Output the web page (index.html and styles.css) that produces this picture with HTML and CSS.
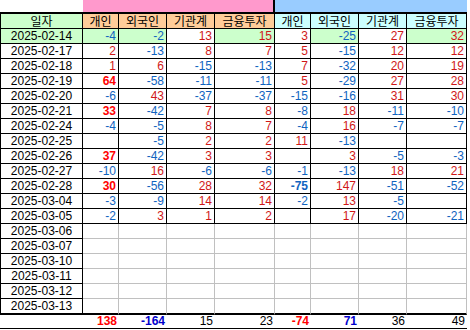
FILE: index.html
```html
<!DOCTYPE html>
<html lang="ko">
<head>
<meta charset="utf-8">
<link rel="stylesheet" href="styles.css">
</head>
<body>
<div class="sheet">
  <div class="band blank"></div>
  <div class="band pink"></div>
  <div class="band blue"></div>

  <div class="hd date-hd first">일자</div>
  <div class="hd a">개인</div>
  <div class="hd a">외국인</div>
  <div class="hd a">기관계</div>
  <div class="hd a sep">금융투자</div>
  <div class="hd b">개인</div>
  <div class="hd b">외국인</div>
  <div class="hd b">기관계</div>
  <div class="hd b">금융투자</div>

  <div class="c d first g">2025-02-14</div><div class="c n g blu">-4</div><div class="c n g blu">-2</div><div class="c n red">13</div><div class="c n g red sep">15</div><div class="c n red">3</div><div class="c n g blu">-25</div><div class="c n red">27</div><div class="c n g red">32</div>
  <div class="c d first">2025-02-17</div><div class="c n red">2</div><div class="c n blu">-13</div><div class="c n red">8</div><div class="c n red sep">7</div><div class="c n red">5</div><div class="c n blu">-15</div><div class="c n red">12</div><div class="c n red">12</div>
  <div class="c d first">2025-02-18</div><div class="c n red">1</div><div class="c n red">6</div><div class="c n blu">-15</div><div class="c n blu sep">-13</div><div class="c n red">7</div><div class="c n blu">-32</div><div class="c n red">20</div><div class="c n red">19</div>
  <div class="c d first">2025-02-19</div><div class="c n bred">64</div><div class="c n blu">-58</div><div class="c n blu">-11</div><div class="c n blu sep">-11</div><div class="c n red">5</div><div class="c n blu">-29</div><div class="c n red">27</div><div class="c n red">28</div>
  <div class="c d first">2025-02-20</div><div class="c n blu">-6</div><div class="c n red">43</div><div class="c n blu">-37</div><div class="c n blu sep">-37</div><div class="c n blu">-15</div><div class="c n blu">-16</div><div class="c n red">31</div><div class="c n red">30</div>
  <div class="c d first">2025-02-21</div><div class="c n bred">33</div><div class="c n blu">-42</div><div class="c n red">7</div><div class="c n red sep">8</div><div class="c n blu">-8</div><div class="c n red">18</div><div class="c n blu">-11</div><div class="c n blu">-10</div>
  <div class="c d first">2025-02-24</div><div class="c n blu">-4</div><div class="c n blu">-5</div><div class="c n red">8</div><div class="c n red sep">7</div><div class="c n blu">-4</div><div class="c n red">16</div><div class="c n blu">-7</div><div class="c n blu">-7</div>
  <div class="c d first">2025-02-25</div><div class="c n"></div><div class="c n blu">-5</div><div class="c n red">2</div><div class="c n red sep">2</div><div class="c n red">11</div><div class="c n blu">-13</div><div class="c n"></div><div class="c n"></div>
  <div class="c d first">2025-02-26</div><div class="c n bred">37</div><div class="c n blu">-42</div><div class="c n red">3</div><div class="c n red sep">3</div><div class="c n"></div><div class="c n red">3</div><div class="c n blu">-5</div><div class="c n blu">-3</div>
  <div class="c d first">2025-02-27</div><div class="c n blu">-10</div><div class="c n red">16</div><div class="c n blu">-6</div><div class="c n blu sep">-6</div><div class="c n blu">-1</div><div class="c n blu">-13</div><div class="c n red">18</div><div class="c n red">21</div>
  <div class="c d first">2025-02-28</div><div class="c n bred">30</div><div class="c n blu">-56</div><div class="c n red">28</div><div class="c n red sep">32</div><div class="c n bblu">-75</div><div class="c n red">147</div><div class="c n blu">-51</div><div class="c n blu">-52</div>
  <div class="c d first">2025-03-04</div><div class="c n blu">-3</div><div class="c n blu">-9</div><div class="c n red">14</div><div class="c n red sep">14</div><div class="c n blu">-2</div><div class="c n red">13</div><div class="c n blu">-5</div><div class="c n"></div>
  <div class="c d first">2025-03-05</div><div class="c n blu">-2</div><div class="c n red">3</div><div class="c n red">1</div><div class="c n red sep">2</div><div class="c n"></div><div class="c n red">17</div><div class="c n blu">-20</div><div class="c n blu">-21</div>

  <div class="c d first">2025-03-06</div><div class="c e"></div><div class="c e"></div><div class="c e"></div><div class="c e"></div><div class="c e"></div><div class="c e"></div><div class="c e"></div><div class="c e"></div>
  <div class="c d first">2025-03-07</div><div class="c e"></div><div class="c e"></div><div class="c e"></div><div class="c e"></div><div class="c e"></div><div class="c e"></div><div class="c e"></div><div class="c e"></div>
  <div class="c d first">2025-03-10</div><div class="c e"></div><div class="c e"></div><div class="c e"></div><div class="c e"></div><div class="c e"></div><div class="c e"></div><div class="c e"></div><div class="c e"></div>
  <div class="c d first">2025-03-11</div><div class="c e"></div><div class="c e"></div><div class="c e"></div><div class="c e"></div><div class="c e"></div><div class="c e"></div><div class="c e"></div><div class="c e"></div>
  <div class="c d first">2025-03-12</div><div class="c e"></div><div class="c e"></div><div class="c e"></div><div class="c e"></div><div class="c e"></div><div class="c e"></div><div class="c e"></div><div class="c e"></div>
  <div class="c d first last">2025-03-13</div><div class="c e last"></div><div class="c e last"></div><div class="c e last"></div><div class="c e last"></div><div class="c e last"></div><div class="c e last"></div><div class="c e last"></div><div class="c e last"></div>

  <div class="t tfirst"></div><div class="t n bred">138</div><div class="t n tblu">-164</div><div class="t n">15</div><div class="t n">23</div><div class="t n bred">-74</div><div class="t n tblu">71</div><div class="t n">36</div><div class="t n">49</div>
</div>
</body>
</html>
```
FILE: styles.css
```css
html, body {
  margin: 0;
  padding: 0;
  background: #ffffff;
}
.sheet {
  display: grid;
  grid-template-columns: 83px 36px 48px 48px 60px 36px 48px 48px 60px;
  grid-template-rows: 14px 15px repeat(18, 15px) 16px 14px;
  width: 467px;
  font-family: "Liberation Sans", Arial, sans-serif;
  font-size: 12px;
  color: #000;
}
.sheet > div {
  box-sizing: border-box;
  white-space: nowrap;
}
.band {
  border-bottom: 2px solid #000;
}
.band.blank { background: #fff; }
.band.pink {
  grid-column: span 4;
  background: #ff99cc;
  border-right: 2px solid #000;
}
.band.blue {
  grid-column: span 4;
  background: #99ccff;
}
.hd {
  font-family: "Noto Sans CJK KR", sans-serif;
  font-size: 12px;
  line-height: 14px;
  text-align: center;
  border-right: 1px solid #000;
  border-bottom: 1px solid #000;
}
.date-hd { background: #ccffcc; }
.hd.a { background: #ffcc99; }
.hd.b { background: #ccffff; }
.first { border-left: 1px solid #000; }
.c {
  line-height: 14px;
  border-right: 1px solid #000;
  border-bottom: 1px solid #000;
}
.c.d {
  text-align: center;
}
.c.n {
  text-align: right;
  padding-right: 2px;
}
.c.e {
  border-right-color: #c0c0c0;
  border-bottom-color: #c0c0c0;
}
.c.last { border-bottom: 2px solid #000; }
.g { background: #ccffcc; }
.red { color: #d01818; }
.blu { color: #1064c0; }
.bred { color: #ff0000; font-weight: bold; }
.bblu { color: #1064c0; font-weight: bold; }
.t {
  line-height: 13px;
  border-bottom: 1px solid #000;
  text-align: right;
  padding-right: 2px;
}
.tblu { color: #0000cc; font-weight: bold; }
```
